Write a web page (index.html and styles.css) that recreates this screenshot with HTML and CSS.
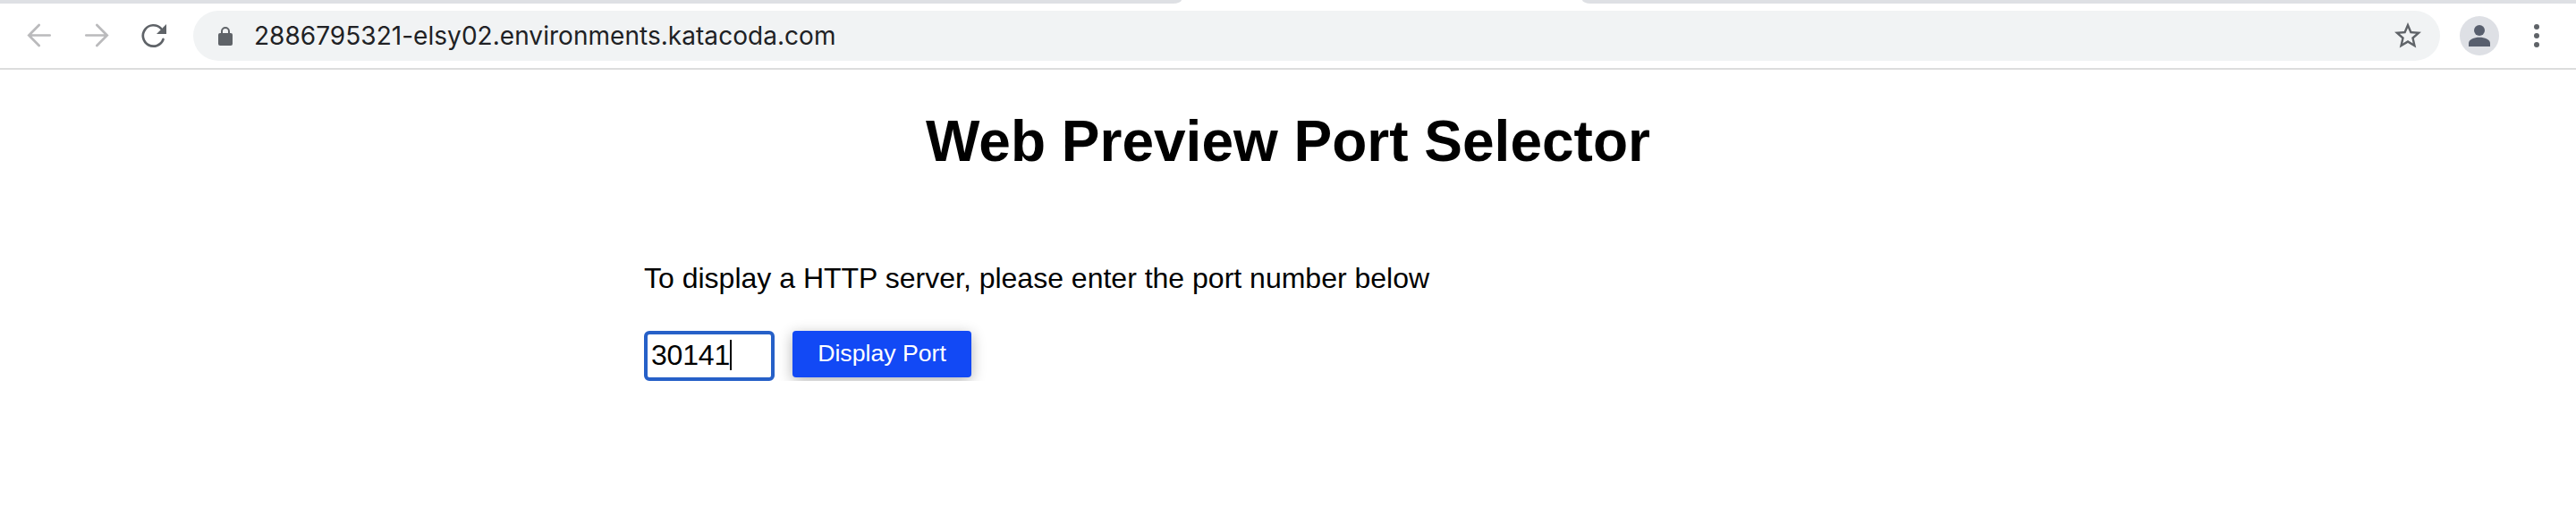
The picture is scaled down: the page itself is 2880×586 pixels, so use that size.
FILE: index.html
```html
<!DOCTYPE html>
<html lang="en">
<head>
<meta charset="utf-8">
<title>Web Preview Port Selector</title>
<link rel="stylesheet" href="styles.css">
</head>
<body>
<header class="browser">
  <div class="tabstrip">
    <div class="tab-inactive tab-left"></div>
    <div class="tab-inactive tab-right"></div>
  </div>
  <nav class="toolbar">
    <svg class="nav-icon" viewBox="0 0 32 32"><path class="line muted" d="M27.700 15.500H4.500M15.700 4 4.300 15.500 15.700 27"/></svg>
    <svg class="nav-icon" viewBox="0 0 32 32"><path class="line muted" d="M4.300 15.500H27.500M16.300 4 27.700 15.500 16.300 27"/></svg>
    <svg class="nav-icon" viewBox="0 0 32 32"><path class="line" d="M24 7.900A11.700 11.700 0 1 0 26.500 20"/><path class="solid" d="M30 3V14H19Z"/></svg>
    <div class="address">
      <svg class="lock" viewBox="0 0 16 22"><path class="line lock-shackle" d="M4 9V6a4 4 0 0 1 8 0v3"/><rect class="solid" y="8" width="16" height="14" rx="2"/></svg>
      <span class="url">2886795321-elsy02.environments.katacoda.com</span>
      <svg class="star" viewBox="0 0 24 24"><path class="solid" d="M22 9.240l-7.190-.620L12 2 9.190 8.630 2 9.240l5.460 4.730L5.820 21 12 17.270 18.180 21l-1.630-7.030L22 9.240zM12 15.400l-3.760 2.270 1-4.280-3.320-2.880 4.380-.380L12 6.100l1.710 4.040 4.380.380-3.320 2.880 1 4.280L12 15.400z"/></svg>
    </div>
    <div class="avatar"><svg viewBox="0 0 24 24"><circle cx="12" cy="6" r="6"/><path d="M0 24V20.500C0 16 6 13.700 12 13.700S24 16 24 20.500V24Z"/></svg></div>
    <svg class="more" viewBox="0 0 6 26"><circle class="solid" cx="3" cy="3" r="3"/><circle class="solid" cx="3" cy="13" r="3"/><circle class="solid" cx="3" cy="23" r="3"/></svg>
  </nav>
</header>
<main class="page">
  <h1 class="title">Web Preview Port Selector</h1>
  <section class="content">
    <p class="intro">To display a HTTP server, please enter the port number below</p>
    <form class="port-form">
      <div class="field"><input class="port" type="text" value="30141" aria-label="Port"><span class="caret"></span></div>
      <button class="submit" type="button">Display Port</button>
    </form>
  </section>
</main>
</body>
</html>
```
FILE: styles.css
```css
* { box-sizing: border-box; }
body { margin: 0; background: #fff; color: #000; font-family: "Liberation Sans", Arial, sans-serif; }
.browser { height: 78px; border-bottom: 2px solid #dcdddd; }
.tabstrip { display: flex; justify-content: space-between; height: 4px; overflow: hidden; }
.tab-inactive { background: #dee0e4; height: 4px; }
.tab-left { width: 1321px; border-bottom-right-radius: 12px 5px; }
.tab-right { width: 1111px; border-bottom-left-radius: 12px 5px; }
.toolbar { display: flex; align-items: center; height: 72px; padding: 0 41px 0 28px; }
.nav-icon { width: 32px; height: 32px; margin-right: 32px; flex: none; }
.nav-icon:nth-child(3) { margin-right: 28px; }
.line { fill: none; stroke: #5f6368; stroke-width: 2.700; stroke-linecap: round; }
.muted { stroke: #bababc; }
.solid { fill: #5f6368; }
.address { display: flex; align-items: center; width: 2512px; height: 56px; border-radius: 28px; background: #f1f3f4; padding: 0 18px 0 28px; }
.lock { width: 16px; height: 22px; margin-right: 24px; }
.lock-shackle { stroke-width: 2; }
.url { flex: 1; font: 28px/40px Inter, sans-serif; letter-spacing: .040px; color: #202124; white-space: nowrap; }
.star { width: 36px; height: 36px; }
.avatar { display: flex; align-items: center; justify-content: center; width: 44px; height: 44px; margin-left: 22px; border-radius: 50%; background: #dee0e5; }
.avatar svg { width: 24px; height: 24px; fill: #585f6e; }
.more { width: 6px; height: 26px; margin-left: auto; }
.page { padding-top: 42px; }
.title { margin: 0; font-size: 64px; line-height: 76px; text-align: center; }
.content { width: 1440px; margin: 96px auto 0; }
.intro { margin: 0; font-size: 32px; line-height: 38px; }
.port-form { display: flex; gap: 20px; margin-top: 40px; align-items: flex-start; }
.field { position: relative; width: 146px; height: 56px; }
.port { width: 100%; height: 100%; border: 4px solid #2660c8; border-radius: 6px; padding: 0 4px 2px; font: 32px "Liberation Sans", Arial, sans-serif; letter-spacing: -.200px; color: #000; background: #fff; outline: none; }
.caret { position: absolute; left: 96px; top: 10px; width: 2px; height: 34px; background: #000; }
.submit { width: 200px; height: 52px; border: 0; border-radius: 4px; background: #1249f5; color: #fff; font: 26.667px "Liberation Sans", Arial, sans-serif; padding: 0 0 2px; box-shadow: 0 4px 16px rgba(0, 0, 0, .30); }
```
